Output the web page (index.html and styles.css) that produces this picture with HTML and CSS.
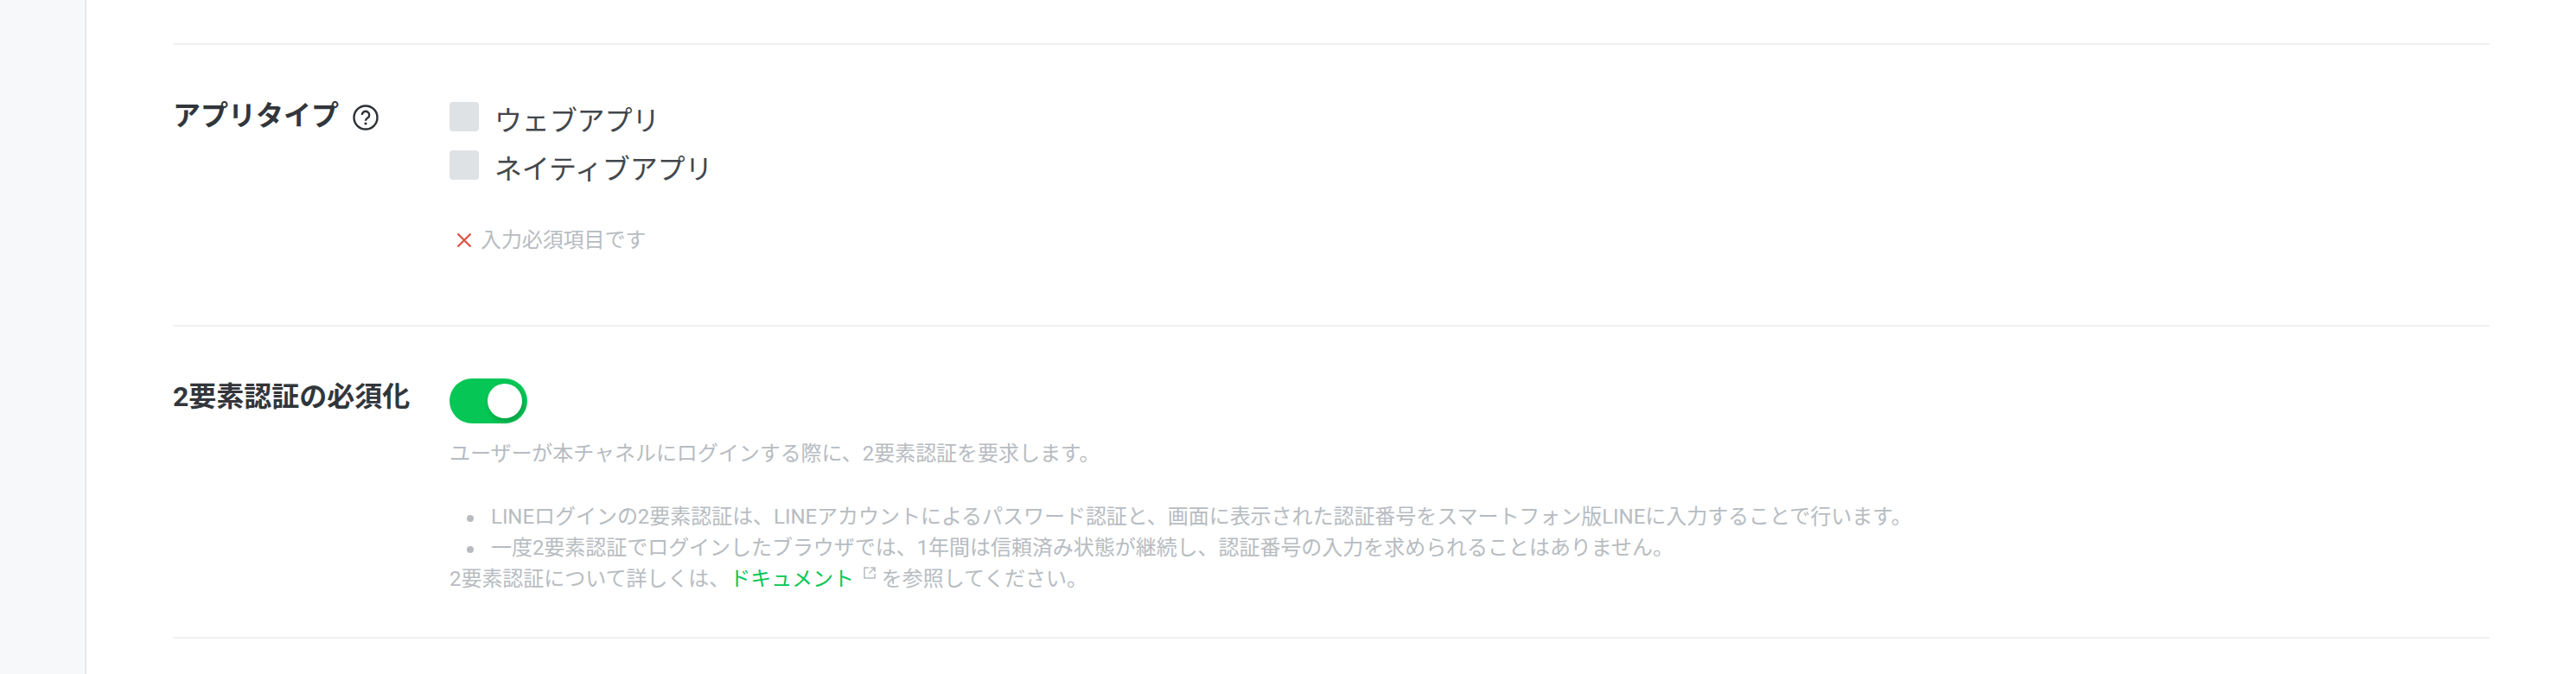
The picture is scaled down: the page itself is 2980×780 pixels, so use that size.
FILE: index.html
```html
<!DOCTYPE html>
<html lang="ja">
<head>
  <meta charset="UTF-8">
  <meta name="viewport" content="width=device-width, initial-scale=1.0">
  <link rel="stylesheet" href="styles.css">
  <title>チャネル設定</title>
</head>
<body>
  <div class="sidebar"></div>
  <main class="content">
    <section class="row row-type">
      <div class="label">アプリタイプ
        <svg class="help" viewBox="0 0 30 30" width="30" height="30">
          <circle cx="15" cy="15" r="13.5" fill="none" stroke="#2d3136" stroke-width="2.4"/>
          <path d="M10.8 12a4.2 4.2 0 1 1 6.4 3.6c-1.4.9-2.2 1.500-2.200 3.200" fill="none" stroke="#2d3136" stroke-width="2.400"/>
          <circle cx="15" cy="22" r="1.600" fill="#2d3136"/>
        </svg>
      </div>
      <div class="field">
        <label class="check"><span class="box"></span>ウェブアプリ</label>
        <label class="check"><span class="box"></span>ネイティブアプリ</label>
        <p class="error">
          <svg class="error-icon" viewBox="0 0 18 18" width="18" height="18">
            <path d="M1.500 1.500l15 15M16.500 1.500l-15 15" fill="none" stroke="#e25548" stroke-width="2.400"/>
          </svg>
          入力必須項目です
        </p>
      </div>
    </section>
    <section class="row row-auth">
      <div class="label">2要素認証の必須化</div>
      <div class="field">
        <div class="toggle"><span class="knob"></span></div>
        <p class="note lead">ユーザーが本チャネルにログインする際に、2要素認証を要求します。</p>
        <ul class="note list">
          <li>LINEログインの2要素認証は、LINEアカウントによるパスワード認証と、画面に表示された認証番号をスマートフォン版LINEに入力することで行います。</li>
          <li>一度2要素認証でログインしたブラウザでは、1年間は信頼済み状態が継続し、認証番号の入力を求められることはありません。</li>
        </ul>
        <p class="note">2要素認証について詳しくは、<a class="doc" href="#">ドキュメント</a>
          <svg class="ext" viewBox="0 0 14 14" width="14" height="14">
            <path d="M6 1H1v12h12V8M8 1h5v5M13 1L6.500 7.500" fill="none" stroke="#b7bcc1" stroke-width="1.500"/>
          </svg>
          を参照してください。</p>
      </div>
    </section>
  </main>
</body>
</html>
```

FILE: styles.css
```css
* {
  box-sizing: border-box;
}

body {
  display: flex;
  height: 780px;
  margin: 0;
  overflow: hidden;
  font-family: Roboto, "Noto Sans CJK JP", sans-serif;
  color: #32363b;
  background-color: #fff;
}

.sidebar {
  width: 100px;
  flex-shrink: 0;
  background-color: #f7f8fa;
  border-right: 2px solid #e6e8ea;
}

.content {
  width: 2780px;
  padding: 50px 0 0 100px;
}

.row {
  display: flex;
  border-top: 2px solid #eff0f1;
}

.row-type {
  height: 326px;
  padding-top: 57px;
}

.row-type .label {
  margin-top: 2px;
}

.row-auth {
  height: 363px;
  padding-top: 60px;
  border-bottom: 2px solid #eff0f1;
}

.row-auth .label {
  margin-top: -2px;
}

.label {
  display: flex;
  align-items: flex-start;
  width: 320px;
  height: 46px;
  flex-shrink: 0;
  font-size: 32px;
  font-weight: 700;
  line-height: 46px;
}

.help {
  margin: 10px 0 0 16px;
}

.check {
  display: flex;
  align-items: center;
  height: 56px;
  font-size: 32px;
  letter-spacing: -0.15px;
  color: #43474c;
}

.box {
  width: 34px;
  height: 34px;
  margin: -4px 18px 0 0;
  background-color: #dfe2e4;
  border-radius: 4px;
}

.error {
  display: flex;
  align-items: center;
  margin: 39px 0 0 8px;
  font-size: 24px;
  line-height: 36px;
  letter-spacing: -0.1px;
  color: #b7bcc1;
}

.error-icon {
  margin-right: 10px;
}

.toggle {
  display: flex;
  justify-content: flex-end;
  width: 90px;
  height: 52px;
  padding: 6px;
  background-color: #06c755;
  border-radius: 26px;
}

.knob {
  width: 40px;
  height: 40px;
  background-color: #fff;
  border-radius: 50%;
  box-shadow: 2px 4px 6px rgba(0, 0, 0, 0.2);
}

.note {
  margin: 0;
  font-size: 24px;
  line-height: 36px;
  letter-spacing: -0.04px;
  color: #b7bcc1;
}

.lead {
  margin-top: 17px;
}

.list {
  margin-top: 37px;
  padding-left: 20px;
  list-style: none;
}

.list li {
  display: flex;
}

.list li::before {
  content: "";
  flex-shrink: 0;
  width: 8px;
  height: 8px;
  margin: 16px 20px 0 0;
  background-color: #b7bcc1;
  border-radius: 50%;
}

.doc {
  color: #06c755;
  text-decoration: none;
}

.ext {
  margin: 0 1px 0 5px;
  vertical-align: 8px;
}
```
